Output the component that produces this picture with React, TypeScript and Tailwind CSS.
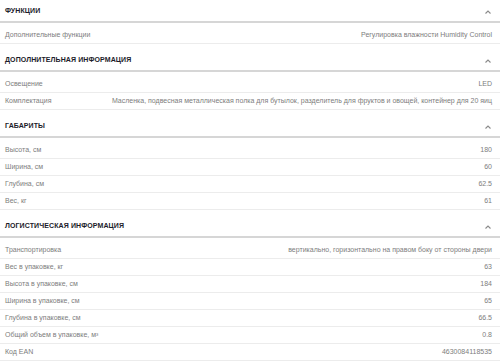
import React from 'react';

type Row = [string, string];

interface Section {
    title: string;
    rows: Row[];
}

const sections: Section[] = [
    {
        title: 'Функции',
        rows: [['Дополнительные функции', 'Регулировка влажности Humidity Control']],
    },
    {
        title: 'Дополнительная информация',
        rows: [
            ['Освещение', 'LED'],
            ['Комплектация', 'Масленка, подвесная металлическая полка для бутылок, разделитель для фруктов и овощей, контейнер для 20 яиц'],
        ],
    },
    {
        title: 'Габариты',
        rows: [
            ['Высота, см', '180'],
            ['Ширина, см', '60'],
            ['Глубина, см', '62.5'],
            ['Вес, кг', '61'],
        ],
    },
    {
        title: 'Логистическая информация',
        rows: [
            ['Транспортировка', 'вертикально, горизонтально на правом боку от стороны двери'],
            ['Вес в упаковке, кг', '63'],
            ['Высота в упаковке, см', '184'],
            ['Ширина в упаковке, см', '65'],
            ['Глубина в упаковке, см', '66.5'],
            ['Общий объем в упаковке, м³', '0.8'],
            ['Код EAN', '4630084118535'],
        ],
    },
];

function Chevron() {
    return (
        <svg width="6" height="4" viewBox="0 0 6 4" className="text-[#8a8a8a]">
            <polyline points="0.5,3.5 3,1 5.5,3.5" fill="none" stroke="currentColor" strokeWidth="1.1" />
        </svg>
    );
}

function SpecSection({ section, first }: { section: Section; first: boolean }) {
    return (
        <div className={first ? '' : 'mt-[5px]'}>
            <div className="h-[23px] pt-[2px] flex items-center justify-between pl-[5px] pr-[9px] border-b-2 border-[#d6d6d6]">
                <span className="text-[7px] font-bold uppercase text-[#1c1c2a] tracking-[0.1px]">{section.title}</span>
                <Chevron />
            </div>
            <div className="pt-[4px]">
                {section.rows.map(([label, value]) => (
                    <div key={label} className="h-[17px] flex items-center justify-between gap-4 pl-[5px] pr-[8px] border-b border-[#ececec] text-[7px] text-[#7d7d7d]">
                        <span className="whitespace-nowrap">{label}</span>
                        <span className="whitespace-nowrap text-right">{value}</span>
                    </div>
                ))}
            </div>
        </div>
    );
}

export default function App() {
    return (
        <div className="w-[500px] h-[362px] overflow-hidden bg-white font-['Liberation_Sans',sans-serif]">
            {sections.map((s, i) => (
                <SpecSection key={s.title} section={s} first={i === 0} />
            ))}
        </div>
    );
}
